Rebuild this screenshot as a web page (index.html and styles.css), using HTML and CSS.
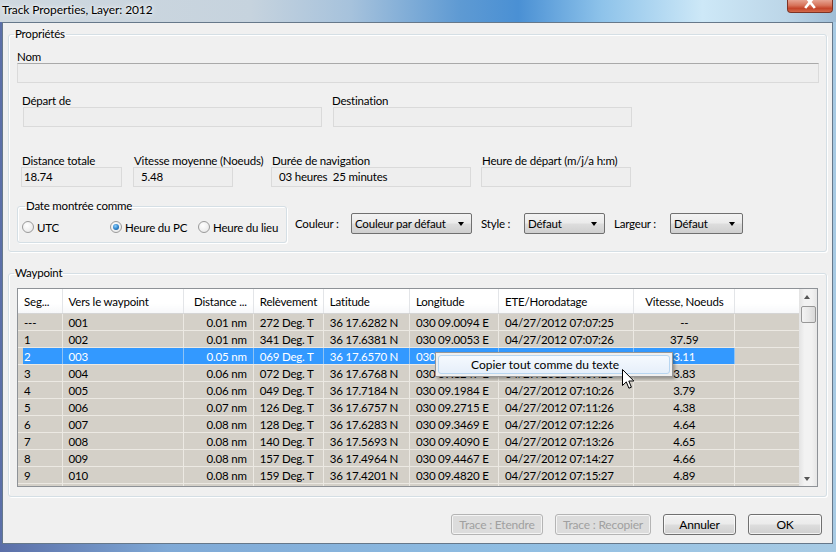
FILE: index.html
```html
<!DOCTYPE html>
<html lang="fr">
<head>
    <meta charset="UTF-8">
    <title>Track Properties, Layer: 2012</title>
    <link rel="stylesheet" href="styles.css">
</head>
<body>
    <div class="titlebar">
        <span class="title">Track Properties, Layer: 2012</span>
        <span class="close-btn">
            <svg width="14" height="9" viewBox="0 0 14 9"><path d="M3 -3 L11 7 M11 -3 L3 7" stroke="#fff" stroke-width="2.6" stroke-linecap="square"/></svg>
        </span>
    </div>

    <div class="client">
        <fieldset class="group props">
            <legend>Propriétés</legend>

            <div class="field">
                <label>Nom</label>
                <div class="box box-dark"></div>
            </div>

            <div class="row row-places">
                <div class="field w-place">
                    <label>Départ de</label>
                    <div class="box"></div>
                </div>
                <div class="field w-place">
                    <label>Destination</label>
                    <div class="box"></div>
                </div>
            </div>

            <div class="row row-stats">
                <div class="field w-dist">
                    <label>Distance totale</label>
                    <div class="box">18.74</div>
                </div>
                <div class="field w-speed">
                    <label>Vitesse moyenne (Noeuds)</label>
                    <div class="box box-indent">5.48</div>
                </div>
                <div class="field w-dur">
                    <label>Durée de navigation</label>
                    <div class="box box-indent">03 heures&nbsp; 25 minutes</div>
                </div>
                <div class="field w-start">
                    <label>Heure de départ (m/j/a h:m)</label>
                    <div class="box"></div>
                </div>
            </div>

            <div class="row row-options">
                <fieldset class="group date-group">
                    <legend>Date montrée comme</legend>
                    <div class="radios">
                        <span class="radio r-utc"><span class="dot"></span>UTC</span>
                        <span class="radio r-pc"><span class="dot checked"></span>Heure du PC</span>
                        <span class="radio"><span class="dot"></span>Heure du lieu</span>
                    </div>
                </fieldset>
                <div class="combo-set">
                    <span class="combo-label l-color">Couleur :</span>
                    <span class="combo c-color">Couleur par défaut<i class="arrow"></i></span>
                    <span class="combo-label l-style">Style :</span>
                    <span class="combo c-style">Défaut<i class="arrow"></i></span>
                    <span class="combo-label l-width">Largeur :</span>
                    <span class="combo c-width">Défaut<i class="arrow"></i></span>
                </div>
            </div>
        </fieldset>

        <fieldset class="group waypoints">
            <legend>Waypoint</legend>
            <div class="listview">
                <div class="list-body">
                    <table class="grid">
                        <colgroup>
                            <col style="width:44px"><col style="width:121px"><col style="width:70px"><col style="width:70px">
                            <col style="width:86px"><col style="width:89px"><col style="width:135px"><col style="width:101px"><col style="width:64px">
                        </colgroup>
                        <thead>
                            <tr>
                                <th>Seg...</th><th>Vers le waypoint</th><th class="right">Distance ...</th><th>Relèvement</th>
                                <th>Latitude</th><th>Longitude</th><th>ETE/Horodatage</th><th class="center">Vitesse, Noeuds</th><th class="filler"></th>
                            </tr>
                        </thead>
                        <tbody id="rows"></tbody>
                    </table>
                </div>
                <div class="scrollbar">
                    <span class="sb-arrow up"></span>
                    <span class="sb-thumb"></span>
                    <span class="sb-track"></span>
                    <span class="sb-arrow down"></span>
                </div>

                <div class="context-menu">
                    <div class="menu-item">Copier tout comme du texte</div>
                </div>
                <svg class="cursor" width="13" height="21" viewBox="0 0 13 21">
                    <path d="M0.5 0.5 L0.5 16.5 L4.3 12.9 L6.9 19.2 L9.4 18.2 L6.8 12 L11.8 12 Z" fill="#fff" stroke="#000" stroke-width="1" stroke-linejoin="miter"/>
                </svg>
            </div>
        </fieldset>

        <div class="buttons">
            <button class="btn disabled b-extend">Trace : Etendre</button>
            <button class="btn disabled b-copy">Trace : Recopier</button>
            <button class="btn b-cancel">Annuler</button>
            <button class="btn b-ok">OK</button>
        </div>
    </div>

    <script>
        const waypoints = [
            ['---', '001', '0.01 nm', '272 Deg. T', '36 17.6282 N', '030 09.0094 E', '04/27/2012 07:07:25', '--'],
            ['1', '002', '0.01 nm', '341 Deg. T', '36 17.6381 N', '030 09.0053 E', '04/27/2012 07:07:26', '37.59'],
            ['2', '003', '0.05 nm', '069 Deg. T', '36 17.6570 N', '030 09.0512 E', '04/27/2012 07:08:26', '3.11'],
            ['3', '004', '0.06 nm', '072 Deg. T', '36 17.6768 N', '030 09.1247 E', '04/27/2012 07:09:26', '3.83'],
            ['4', '005', '0.06 nm', '049 Deg. T', '36 17.7184 N', '030 09.1984 E', '04/27/2012 07:10:26', '3.79'],
            ['5', '006', '0.07 nm', '126 Deg. T', '36 17.6757 N', '030 09.2715 E', '04/27/2012 07:11:26', '4.38'],
            ['6', '007', '0.08 nm', '128 Deg. T', '36 17.6283 N', '030 09.3469 E', '04/27/2012 07:12:26', '4.64'],
            ['7', '008', '0.08 nm', '140 Deg. T', '36 17.5693 N', '030 09.4090 E', '04/27/2012 07:13:26', '4.65'],
            ['8', '009', '0.08 nm', '157 Deg. T', '36 17.4964 N', '030 09.4467 E', '04/27/2012 07:14:27', '4.66'],
            ['9', '010', '0.08 nm', '159 Deg. T', '36 17.4201 N', '030 09.4820 E', '04/27/2012 07:15:27', '4.89'],
            ['', '', '', '', '', '', '', '']
        ];

        const tbody = document.getElementById('rows');
        waypoints.forEach((wp, i) => {
            const tr = document.createElement('tr');
            if (i === 2) tr.className = 'selected';
            wp.forEach((value, col) => {
                const td = document.createElement('td');
                td.textContent = value;
                if (col === 2) td.className = 'right';
                if (col === 7) td.className = 'center';
                tr.appendChild(td);
            });
            const filler = document.createElement('td'); // empty filler column
            filler.className = 'filler';
            tr.appendChild(filler);
            tbody.appendChild(tr);
        });
    </script>
</body>
</html>
```

FILE: styles.css
```css
* {
    box-sizing: border-box;
}
body {
    margin: 0;
    width: 836px;
    height: 552px;
    overflow: hidden;
    font-family: Lato, "Noto Sans", sans-serif;
    font-size: 11.5px;
    letter-spacing: -0.2px;
    color: #000;
    white-space: nowrap;
    background: linear-gradient(90deg, #5b6fa8 0%, #7fa9d6 20%, #8fbde2 60%, #a8cbe4 100%);
}

/* title bar */
.titlebar {
    height: 22px;
    display: flex;
    align-items: flex-start;
    background: linear-gradient(90deg, #cfd8df 0%, #c6d3de 30%, #a6c2dc 42%, #5e9ad3 55%, #4a90d4 62%, #8ec3ea 72%, #cde8f7 84%, #bcd6e8 94%, #9fbdd6 100%);
}
.title {
    padding: 2px 0 0 2px;
    line-height: 16px;
    font-size: 12px;
    letter-spacing: -0.1px;
    text-shadow: 0 0 6px #fff, 0 0 3px #fff;
}
.close-btn {
    margin-left: auto;
    margin-right: 3px;
    width: 46px;
    height: 13px;
    display: flex;
    justify-content: center;
    align-items: flex-start;
    border: 1px solid #7d3325;
    border-top: none;
    border-radius: 0 0 4px 4px;
    background: linear-gradient(180deg, #e6a392 0%, #d7735a 45%, #c4442a 70%, #d36a4c 100%);
}

/* window client area */
.client {
    margin-left: 2px;
    width: 831px;
    height: 522px;
    background: #f0f0f0;
    border: 1px solid #66788a;
    display: flex;
    flex-direction: column;
}

.group {
    margin: 0;
    min-width: 0;
    border: 1px solid #d5dfe5;
    border-radius: 3px;
    box-shadow: inset 1px 1px 0 #fff, 1px 1px 0 #fff;
}
.group legend {
    line-height: 14px;
    padding: 0 1px;
    margin-left: -3px;
}

.props {
    margin: 4px 5px 0 5px;
    padding: 9px 7px 8px 8px;
}

.field label {
    display: block;
    line-height: 13px;
}
.box {
    height: 20px;
    line-height: 18px;
    padding-left: 2px;
    background: #eeeeee;
    border: 1px solid #dadada;
}
.box-dark {
    border-top-color: #a9a9a9;
}
.box-indent {
    padding-left: 7px;
}

.row {
    display: flex;
}
.row-places {
    margin-top: 11px;
    padding-left: 6px;
    gap: 11px;
}
.row-places label {
    margin-left: -1px;
}
.w-place {
    width: 299px;
}

.row-stats {
    margin-top: 27px;
    padding-left: 4px;
}
.row-stats label {
    padding-left: 1px;
}
.w-dist {
    width: 101px;
}
.w-speed {
    width: 100px;
    margin-left: 11px;
}
.w-dur {
    width: 200px;
    margin-left: 38px;
}
.w-start {
    width: 150px;
    margin-left: 10px;
}

.row-options {
    margin-top: 12px;
    align-items: flex-start;
}
.date-group {
    width: 270px;
    padding: 6px 4px 7px 4px;
}
.date-group legend {
    margin-left: 3px;
}
.radios {
    display: flex;
    align-items: center;
    height: 16px;
}
.radio {
    display: flex;
    align-items: center;
    gap: 3px;
}
.r-utc, .r-pc {
    width: 88px;
}
.dot {
    width: 12px;
    height: 12px;
    border-radius: 50%;
    border: 1px solid #9a9a9a;
    background: radial-gradient(circle at 40% 35%, #ffffff 0%, #ececec 70%, #dcdcdc 100%);
    position: relative;
}
.dot.checked::after {
    content: "";
    position: absolute;
    left: 2px;
    top: 2px;
    width: 6px;
    height: 6px;
    border-radius: 50%;
    background: radial-gradient(circle at 40% 35%, #8cd0ff 0%, #2b7fc7 55%, #174f86 100%);
}

.combo-set {
    display: flex;
    align-items: center;
    margin-top: 14px;
}
.combo-label {
    line-height: 21px;
}
.l-color {
    width: 56px;
    margin-left: 8px;
}
.l-style {
    width: 43px;
    margin-left: 9px;
}
.l-width {
    width: 56px;
    margin-left: 9px;
}
.combo {
    position: relative;
    height: 21px;
    line-height: 19px;
    padding-left: 3px;
    border: 1px solid #707070;
    border-radius: 2px;
    background: linear-gradient(180deg, #f3f3f3 0%, #ebebeb 48%, #dddddd 52%, #cfcfcf 100%);
}
.c-color {
    width: 121px;
}
.c-style {
    width: 81px;
}
.c-width {
    width: 73px;
}
.arrow {
    position: absolute;
    right: 7px;
    top: 8px;
    border-left: 3.5px solid transparent;
    border-right: 3.5px solid transparent;
    border-top: 4px solid #000;
}

/* waypoint list */
.waypoints {
    margin: 14px 5px 0 5px;
    padding: 8px 8px 9px 8px;
}
.listview {
    position: relative;
    height: 199px;
    display: flex;
    border: 1px solid #8e9297;
    background: #fff;
}
.list-body {
    width: 781px;
    overflow: hidden;
}
.grid {
    width: 781px;
    table-layout: fixed;
    border-collapse: collapse;
}
.grid th {
    height: 24px;
    padding: 1px 6px 0 6px;
    font-weight: normal;
    text-align: left;
    overflow: hidden;
    background: linear-gradient(180deg, #ffffff 0%, #ffffff 60%, #f6f7f9 100%);
    border-right: 1px solid #e3e5e8;
    border-bottom: 1px solid #d5d5d5;
}
.grid td {
    height: 17px;
    padding: 1px 6px 0 6px;
    line-height: 15px;
    overflow: hidden;
    background: #d4d0c8;
    border-right: 1px solid #ece9e3;
    border-bottom: 1px solid #ece9e3;
}
.grid .right {
    text-align: right;
}
.grid .center {
    text-align: center;
}
.grid tr.selected td {
    background: #3399ff;
    color: #fff;
    border-right-color: #8ec3f5;
}
.grid tr.selected td:first-child {
    background: linear-gradient(90deg, #d4d0c8 5px, #3399ff 5px);
}
.grid th.filler,
.grid td.filler,
.grid tr.selected td.filler {
    border-right: none;
}
.grid tr.selected td.filler {
    background: #d4d0c8;
}

.scrollbar {
    width: 18px;
    display: flex;
    flex-direction: column;
    align-items: center;
    background: linear-gradient(90deg, #e3e3e3, #f2f2f2 30%, #f2f2f2 70%, #e6e6e6);
}
.sb-arrow {
    height: 17px;
    width: 100%;
    position: relative;
}
.sb-arrow::after {
    content: "";
    position: absolute;
    left: 5px;
    border-left: 3.5px solid transparent;
    border-right: 3.5px solid transparent;
}
.sb-arrow.up::after {
    top: 6px;
    border-bottom: 4px solid #555;
}
.sb-arrow.down::after {
    top: 8px;
    border-top: 4px solid #555;
}
.sb-thumb {
    width: 15px;
    height: 17px;
    border: 1px solid #979797;
    border-radius: 2px;
    background: linear-gradient(90deg, #f3f3f3, #e8e8e8 50%, #d8d8d8);
}
.sb-track {
    flex: 1;
}

.context-menu {
    position: absolute;
    left: 417px;
    top: 63px;
    width: 238px;
    height: 25px;
    padding: 2px;
    background: #f0f0f0;
    border: 1px solid #979797;
    box-shadow: 2px 2px 3px rgba(0, 0, 0, 0.3);
}
.menu-item {
    height: 19px;
    line-height: 17px;
    padding-left: 32px;
    font-size: 12px;
    letter-spacing: 0;
    border: 1px solid #b8d6f1;
    border-radius: 3px;
    background: linear-gradient(180deg, #f5f9fe 0%, #e6effa 100%);
}
.cursor {
    position: absolute;
    left: 604px;
    top: 80px;
}

/* bottom buttons */
.buttons {
    display: flex;
    justify-content: flex-end;
    gap: 12px;
    margin-top: 17px;
    padding-right: 10px;
}
.btn {
    height: 21px;
    padding: 0;
    font-family: inherit;
    font-size: 12px;
    letter-spacing: inherit;
    color: #000;
    border: 1px solid #707070;
    border-radius: 3px;
    background: linear-gradient(180deg, #f2f2f2 0%, #ebebeb 48%, #dddddd 52%, #cfcfcf 100%);
    box-shadow: inset 0 0 0 1px rgba(255, 255, 255, 0.7);
}
.btn.disabled {
    color: #a0a0a0;
    border-color: #b4b4b4;
    background: #dcdcdc;
    box-shadow: inset 0 0 0 1px #f4f4f4;
}
.b-extend {
    width: 92px;
}
.b-copy {
    width: 96px;
}
.b-cancel {
    width: 73px;
}
.b-ok {
    width: 74px;
}
```
